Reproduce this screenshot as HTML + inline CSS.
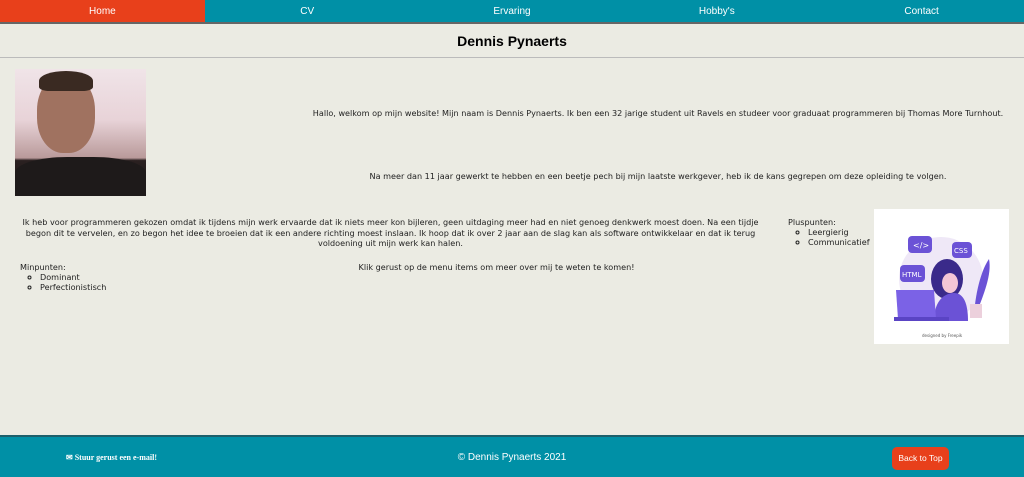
<!DOCTYPE html>
<html><head><meta charset="utf-8"><style>
*{margin:0;padding:0;box-sizing:border-box}
body{width:1024px;height:477px;background:#ebebe3;font-family:"DejaVu Sans",Verdana,sans-serif;font-size:8.1px;color:#222;position:relative;overflow:hidden}
.nav{display:flex;height:24px;background:#0090a6;border-bottom:2px solid #666}
.nav div{flex:1;color:#fff;text-align:center;font-family:"Liberation Sans",sans-serif;font-size:10px;line-height:23px}
.nav .a{background:#e8401b}
h1{position:absolute;top:24px;left:0;width:1024px;height:34px;border-bottom:1px solid #bbb;text-align:center;font-family:"Liberation Sans",sans-serif;font-size:14px;font-weight:bold;line-height:34px;color:#000}
.p{position:absolute;text-align:center}
ul{margin-left:20px}
li{list-style-type:circle}
.foot{position:absolute;top:435px;left:0;width:1024px;height:42px;background:#0090a6;border-top:2px solid #1d5f6a;color:#fff}
</style></head><body>
<div class="nav"><div class="a">Home</div><div>CV</div><div>Ervaring</div><div>Hobby's</div><div>Contact</div></div>
<h1>Dennis Pynaerts</h1>
<div style="position:absolute;left:15px;top:69px;width:131px;height:127px;background:linear-gradient(180deg,#f0e4e8 0%,#e8d3d8 40%,#b99a9a 70%,#2a2020 72%,#1c1818 100%);overflow:hidden">
<div style="position:absolute;left:22px;top:6px;width:58px;height:78px;border-radius:45%;background:#a07260"></div>
<div style="position:absolute;left:24px;top:2px;width:54px;height:20px;border-radius:50% 50% 20% 20%;background:#3a2a22"></div>
<div style="position:absolute;left:0;top:88px;width:131px;height:40px;border-radius:40% 40% 0 0;background:#1e1a1a"></div>
</div>
<div class="p" style="left:292px;top:108px;width:732px">Hallo, welkom op mijn website! Mijn naam is Dennis Pynaerts. Ik ben een 32 jarige student uit Ravels en studeer voor graduaat programmeren bij Thomas More Turnhout.</div>
<div class="p" style="left:292px;top:171px;width:732px">Na meer dan 11 jaar gewerkt te hebben en een beetje pech bij mijn laatste werkgever, heb ik de kans gegrepen om deze opleiding te volgen.</div>
<div class="p" style="left:18px;top:217px;width:745px;line-height:10.5px">Ik heb voor programmeren gekozen omdat ik tijdens mijn werk ervaarde dat ik niets meer kon bijleren, geen uitdaging meer had en niet genoeg denkwerk moest doen. Na een tijdje begon dit te vervelen, en zo begon het idee te broeien dat ik een andere richting moest inslaan. Ik hoop dat ik over 2 jaar aan de slag kan als software ontwikkelaar en dat ik terug voldoening uit mijn werk kan halen.</div>
<div class="p" style="left:20px;top:262px;text-align:left;line-height:10px">Minpunten:<ul><li>Dominant</li><li>Perfectionistisch</li></ul></div>
<div class="p" style="left:130px;top:262px;width:733px">Klik gerust op de menu items om meer over mij te weten te komen!</div>
<div class="p" style="left:788px;top:217px;text-align:left;line-height:10px">Pluspunten:<ul><li>Leergierig</li><li>Communicatief</li></ul></div>
<div style="position:absolute;left:874px;top:209px;width:135px;height:135px;background:#fff">
<svg width="135" height="135" viewBox="0 0 135 135">
<circle cx="67" cy="70" r="42" fill="#efe8f7"/>
<rect x="34" y="27" width="24" height="17" rx="4" fill="#6b52d6"/><text x="39" y="39" font-size="8" fill="#fff" font-family="DejaVu Sans">&lt;/&gt;</text>
<rect x="78" y="33" width="20" height="16" rx="4" fill="#6b52d6"/><text x="80" y="44" font-size="7" fill="#fff" font-family="DejaVu Sans">CSS</text>
<rect x="26" y="56" width="25" height="17" rx="4" fill="#6b52d6"/><text x="28" y="68" font-size="7" fill="#fff" font-family="DejaVu Sans">HTML</text>
<path d="M100 105 C102 80 108 60 115 50 C118 65 110 85 102 105Z" fill="#6b52d6"/>
<rect x="96" y="95" width="12" height="14" fill="#ecd0dc"/>
<ellipse cx="73" cy="70" rx="16" ry="20" fill="#3a2a8a"/>
<ellipse cx="76" cy="74" rx="8" ry="10" fill="#f4c6d6"/>
<path d="M60 112 C60 90 72 84 80 84 C92 84 94 100 94 112Z" fill="#6b52d6"/>
<path d="M22 81 L60 81 L62 110 L24 110Z" fill="#7b62e6"/>
<rect x="20" y="108" width="55" height="4" fill="#5a44c4"/>
<text x="48" y="128" font-size="4" fill="#555" font-family="DejaVu Sans">designed by Freepik</text>
</svg></div>
<div class="foot">
<div style="position:absolute;left:66px;top:16px;font-family:'Liberation Serif',serif;font-weight:bold;font-size:8px">✉ Stuur gerust een e-mail!</div>
<div style="position:absolute;left:0;width:1024px;top:15px;text-align:center;font-family:'Liberation Sans',sans-serif;font-size:10px">© Dennis Pynaerts 2021</div>
<div style="position:absolute;left:892px;top:10px;width:57px;height:23px;background:#e8401b;border-radius:5px;text-align:center;line-height:23px;font-family:'Liberation Sans',sans-serif;font-size:8.5px">Back to Top</div>
</div>
</body></html>
